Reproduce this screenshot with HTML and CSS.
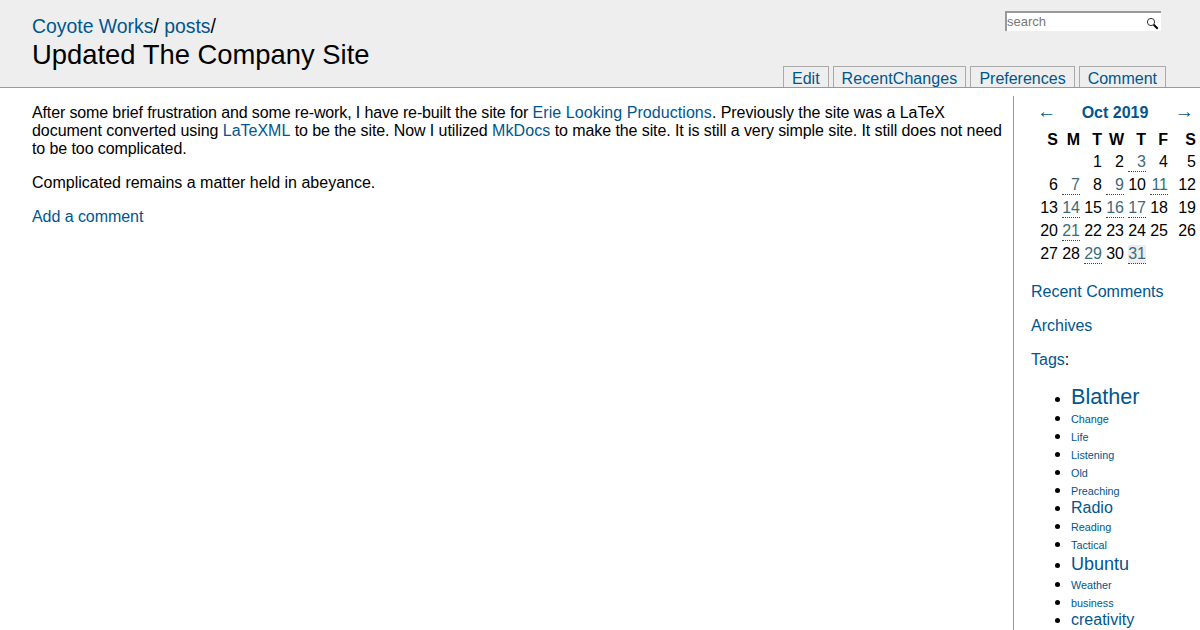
FILE: index.html
```html
<!DOCTYPE html>
<html lang="en">
<head>
<meta charset="utf-8">
<title>Updated The Company Site</title>
<link rel="stylesheet" href="styles.css">
</head>
<body>
<header class="page-header">
  <div class="titles">
    <div class="crumbs"><a href="#">Coyote Works</a>/ <a href="#">posts</a>/</div>
    <h1 class="title">Updated The Company Site</h1>
  </div>
  <div class="header-side">
    <form class="search">
      <span class="search-text">search</span>
      <svg class="search-icon" width="13" height="13" viewBox="0 0 13 13"><circle cx="5" cy="5" r="3.6" fill="#fff" stroke="#333" stroke-width="1"/><path d="M7.7 7.7l4 4" stroke="#000" stroke-width="2"/></svg>
    </form>
    <nav class="tabs">
      <a class="tab" href="#">Edit</a>
      <a class="tab tab-wide" href="#">RecentChanges</a>
      <a class="tab" href="#">Preferences</a>
      <a class="tab" href="#">Comment</a>
    </nav>
  </div>
</header>
<div class="layout">
  <main class="content">
    <p><span class="fit-a">After some brief frustration and some re-work, I have re-built the site for </span><a class="fit-link" href="#">Erie Looking Productions</a><span class="fit-b">. Previously the site was a LaTeX document converted using </span><a href="#">LaTeXML</a><span class="fit-c"> to be the site. Now I utilized </span><a class="fit-mk" href="#">MkDocs</a><span class="fit-c"> to make the site. It is still a very simple site. It still does not need to be too complicated.</span></p>
    <p>Complicated remains a matter held in abeyance.</p>
    <p><a class="fit-b" href="#">Add a comment</a></p>
  </main>
  <aside class="sidebar">
    <table class="calendar">
      <colgroup><col class="col-first"><col class="col-day"><col class="col-day"><col class="col-day"><col class="col-day"><col class="col-day"><col class="col-last"></colgroup>
      <tr class="month"><td class="arrow arrow-l"><a href="#">←</a></td><td colspan="5" class="month-name"><a href="#">Oct 2019</a></td><td class="arrow arrow-r"><a href="#">→</a></td></tr>
      <tr class="heads"><th>S</th><th>M</th><th>T</th><th>W</th><th>T</th><th>F</th><th>S</th></tr>
      <tr class="week"><td></td><td></td><td>1</td><td>2</td><td><a class="day" href="#">3</a></td><td>4</td><td>5</td></tr>
      <tr class="week"><td>6</td><td><a class="day" href="#">7</a></td><td>8</td><td><a class="day" href="#">9</a></td><td>10</td><td><a class="day" href="#">11</a></td><td>12</td></tr>
      <tr class="week"><td>13</td><td><a class="day" href="#">14</a></td><td>15</td><td><a class="day" href="#">16</a></td><td><a class="day" href="#">17</a></td><td>18</td><td>19</td></tr>
      <tr class="week"><td>20</td><td><a class="day" href="#">21</a></td><td>22</td><td>23</td><td>24</td><td>25</td><td>26</td></tr>
      <tr class="week"><td>27</td><td>28</td><td><a class="day" href="#">29</a></td><td>30</td><td><a class="day today" href="#">31</a></td><td></td><td></td></tr>
    </table>
    <p class="side-link"><a href="#">Recent Comments</a></p>
    <p class="side-link"><a href="#">Archives</a></p>
    <p class="side-link"><a href="#">Tags</a>:</p>
    <ul class="tags">
      <li><a class="big" href="#">Blather</a></li>
      <li><a class="small" href="#">Change</a></li>
      <li><a class="small" href="#">Life</a></li>
      <li><a class="small" href="#">Listening</a></li>
      <li><a class="small" href="#">Old</a></li>
      <li><a class="small" href="#">Preaching</a></li>
      <li><a class="mid" href="#">Radio</a></li>
      <li><a class="small" href="#">Reading</a></li>
      <li><a class="small" href="#">Tactical</a></li>
      <li><a class="large" href="#">Ubuntu</a></li>
      <li><a class="small" href="#">Weather</a></li>
      <li><a class="small" href="#">business</a></li>
      <li><a class="mid" href="#">creativity</a></li>
    </ul>
  </aside>
</div>
</body>
</html>
```
FILE: styles.css
```css
html, body {
  margin: 0;
  height: 630px;
  overflow: hidden;
  background: #fff;
}
body {
  font-family: "Liberation Sans", Arial, sans-serif;
  font-size: 16px;
  line-height: 18px;
  color: #000;
}
a {
  color: #00568f;
  text-decoration: none;
}
.page-header {
  height: 87px;
  background: #eee;
  border-bottom: 1px solid #999;
  display: flex;
  justify-content: space-between;
  padding-left: 32px;
}
.titles {
  padding-top: 15px;
}
.crumbs {
  font-size: 19.4px;
  line-height: 22px;
}
.title {
  margin: 2px 0 0;
  font-size: 27.4px;
  line-height: 32px;
  font-weight: normal;
}
.header-side {
  width: 400px;
  display: flex;
  flex-direction: column;
  align-items: flex-end;
  justify-content: space-between;
  padding-right: 34px;
}
.search {
  margin-top: 11px;
  margin-right: 5px;
  width: 154px;
  height: 18px;
  background: #fff;
  border-top: 2px solid #999;
  border-left: 2px solid #999;
  display: flex;
  justify-content: space-between;
  align-items: center;
  font-size: 13px;
  color: #777;
}
.search-text {
  line-height: 18px;
}
.search-icon {
  margin: 3px 2px 0 0;
}
.tabs {
  display: flex;
  gap: 4px;
}
.tab {
  display: block;
  height: 20px;
  padding: 0 8px;
  border: 1px solid #aaa;
  border-bottom: 0;
  font-size: 16px;
  line-height: 23px;
}
.tab-wide {
  letter-spacing: 0.08px;
}
.layout {
  display: flex;
  height: 542px;
}
.content {
  width: 972px;
  padding: 16px 0 0 32px;
}
.content p {
  margin: 0 0 16px;
}
.fit-a { letter-spacing: -0.13px; }
.fit-b { letter-spacing: -0.055px; }
.fit-c { letter-spacing: -0.09px; }
.fit-link { letter-spacing: 0.06px; }
.fit-mk { letter-spacing: 0.1px; }
.sidebar {
  margin-top: 8px;
  margin-left: 9px;
  flex: 1;
  min-width: 0;
  border-left: 1px solid #999;
  padding: 0 0 0 17px;
}
.calendar {
  border-collapse: separate;
  border-spacing: 0;
  margin: 0 0 0 6px;
  table-layout: fixed;
  width: 159px;
}
.col-first { width: 21px; }
.col-day { width: 22px; }
.col-last { width: 28px; }
.calendar td, .calendar th {
  padding: 0;
  text-align: right;
  vertical-align: baseline;
}
.calendar .month td {
  height: 25px;
  padding-top: 7px;
}
.calendar .month-name {
  text-align: center;
  font-weight: bold;
  white-space: nowrap;
  padding-left: 4px;
}
.arrow {
  white-space: nowrap;
}
.arrow a {
  font-size: 19.2px;
}
.calendar .arrow-l {
  text-align: left;
}
.calendar .arrow-r {
  padding-right: 2px;
}
.calendar .heads th {
  height: 20px;
  padding-top: 3px;
}
.calendar .week td {
  height: 21px;
  padding-top: 2px;
}
.day {
  display: inline-block;
  min-width: 18px;
  color: #3d6b7a;
  border-bottom: 1px dotted #444;
  line-height: 18px;
}
.today {
  background: #eee;
}
.side-link {
  margin: 16px 0;
}
.calendar + .side-link {
  margin-top: 17px;
}
.tags {
  margin: 0;
  padding: 0 0 0 40px;
}
.big { font-size: 21.6px; line-height: 24px; }
.large { font-size: 18px; line-height: 22px; }
.mid { font-size: 16px; line-height: 18px; }
.small { font-size: 10.8px; line-height: 1; }
```
